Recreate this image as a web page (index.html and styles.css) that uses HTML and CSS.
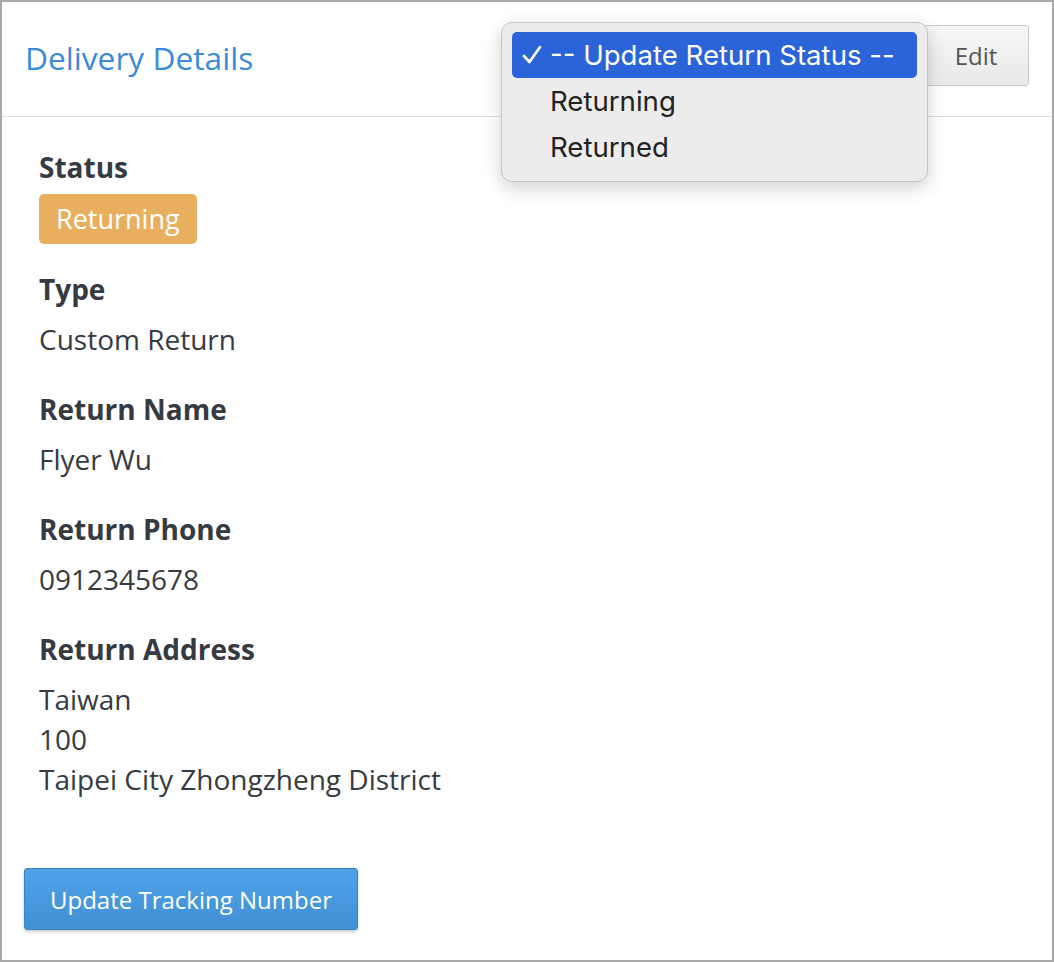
FILE: index.html
```html
<!DOCTYPE html>
<html lang="en">
<head>
  <meta charset="UTF-8" />
  <title>Delivery Details</title>
  <link rel="stylesheet" href="styles.css">
</head>
<body>
  <div class="panel">
    <div class="panel-head">
      <h2 class="panel-title">Delivery Details</h2>
      <div class="head-actions">
        <button class="btn-edit">Edit</button>
        <ul class="status-menu">
          <li class="selected">
            <svg class="check" width="20" height="20" viewBox="0 0 20 20"><path d="M2 11 L7.5 17 L18 2" fill="none" stroke="#fff" stroke-width="2.6" stroke-linecap="round" stroke-linejoin="round"/></svg>
            -- Update Return Status --
          </li>
          <li>Returning</li>
          <li>Returned</li>
        </ul>
      </div>
    </div>
    <div class="panel-body">
      <dl class="details">
        <dt>Status</dt>
        <dd><span class="badge">Returning</span></dd>
        <dt>Type</dt>
        <dd>Custom Return</dd>
        <dt>Return Name</dt>
        <dd>Flyer Wu</dd>
        <dt>Return Phone</dt>
        <dd>0912345678</dd>
        <dt>Return Address</dt>
        <dd>Taiwan<br>100<br>Taipei City Zhongzheng District</dd>
      </dl>
      <button class="btn-primary">Update Tracking Number</button>
    </div>
  </div>
</body>
</html>
```

FILE: styles.css
```css
html, body {
  margin: 0;
  padding: 0;
  height: 100%;
}
body {
  font-family: "Open Sans", sans-serif;
  color: #363a42;
  background: #fff;
}
.panel {
  box-sizing: border-box;
  height: 962px;
  border: 2px solid #a8a8a8;
  background: #fff;
}
.panel-head {
  display: flex;
  align-items: center;
  justify-content: space-between;
  height: 114px;
  padding: 0 23px 0 23px;
  border-bottom: 1px solid #dedede;
}
.panel-title {
  margin: -3px 0 0 0;
  font-size: 31.7px;
  font-weight: normal;
  color: #3b8bd9;
}
.head-actions {
  position: relative;
  margin-top: -8px;
}
.btn-edit {
  display: block;
  width: 106px;
  height: 61px;
  font-family: "Open Sans", sans-serif;
  font-size: 24px;
  color: #555;
  background: linear-gradient(#f7f7f7, #e9e9e9);
  border: 1px solid #c8c8c8;
  border-radius: 3px;
  padding: 0;
}
.status-menu {
  position: absolute;
  right: 101px;
  top: -3px;
  width: 427px;
  box-sizing: border-box;
  margin: 0;
  padding: 9px 10px 11px 10px;
  list-style: none;
  background: #ececec;
  border: 1px solid #c4c4c4;
  border-radius: 11px;
  box-shadow: 0 6px 18px rgba(0, 0, 0, 0.18);
  font-family: Inter, "Liberation Sans", sans-serif;
  font-size: 27.6px;
  color: #222;
}
.status-menu li {
  height: 46px;
  line-height: 46px;
  padding-left: 38px;
  border-radius: 5px;
  position: relative;
}
.status-menu li.selected {
  background: #2b63d9;
  color: #fff;
}
.check {
  position: absolute;
  left: 10px;
  top: 13px;
}
.panel-body {
  padding: 30px 22px 30px 22px;
}
.details {
  margin: 0;
  padding: 0 15px;
}
.details dt {
  font-weight: bold;
  font-size: 28px;
  line-height: 40px;
}
.details dd {
  margin: 10px 0 30px 0;
  font-size: 28px;
  line-height: 40px;
  color: #363a42;
}
.details dd:first-of-type {
  margin-top: 7px;
  margin-bottom: 25px;
  line-height: normal;
}
.badge {
  display: inline-block;
  padding: 0 17px;
  height: 50px;
  line-height: 50px;
  background: #e8b05e;
  color: #fff;
  border-radius: 5px;
  font-size: 27px;
}
.btn-primary {
  margin-top: 39px;
  padding: 0 25px;
  height: 62px;
  font-family: "Open Sans", sans-serif;
  font-size: 24px;
  color: #fff;
  background: linear-gradient(#4fa2e9, #418fd4);
  border: 1px solid #3b82c4;
  border-radius: 3px;
  box-shadow: 0 2px 3px rgba(0, 0, 0, 0.2);
}
```
